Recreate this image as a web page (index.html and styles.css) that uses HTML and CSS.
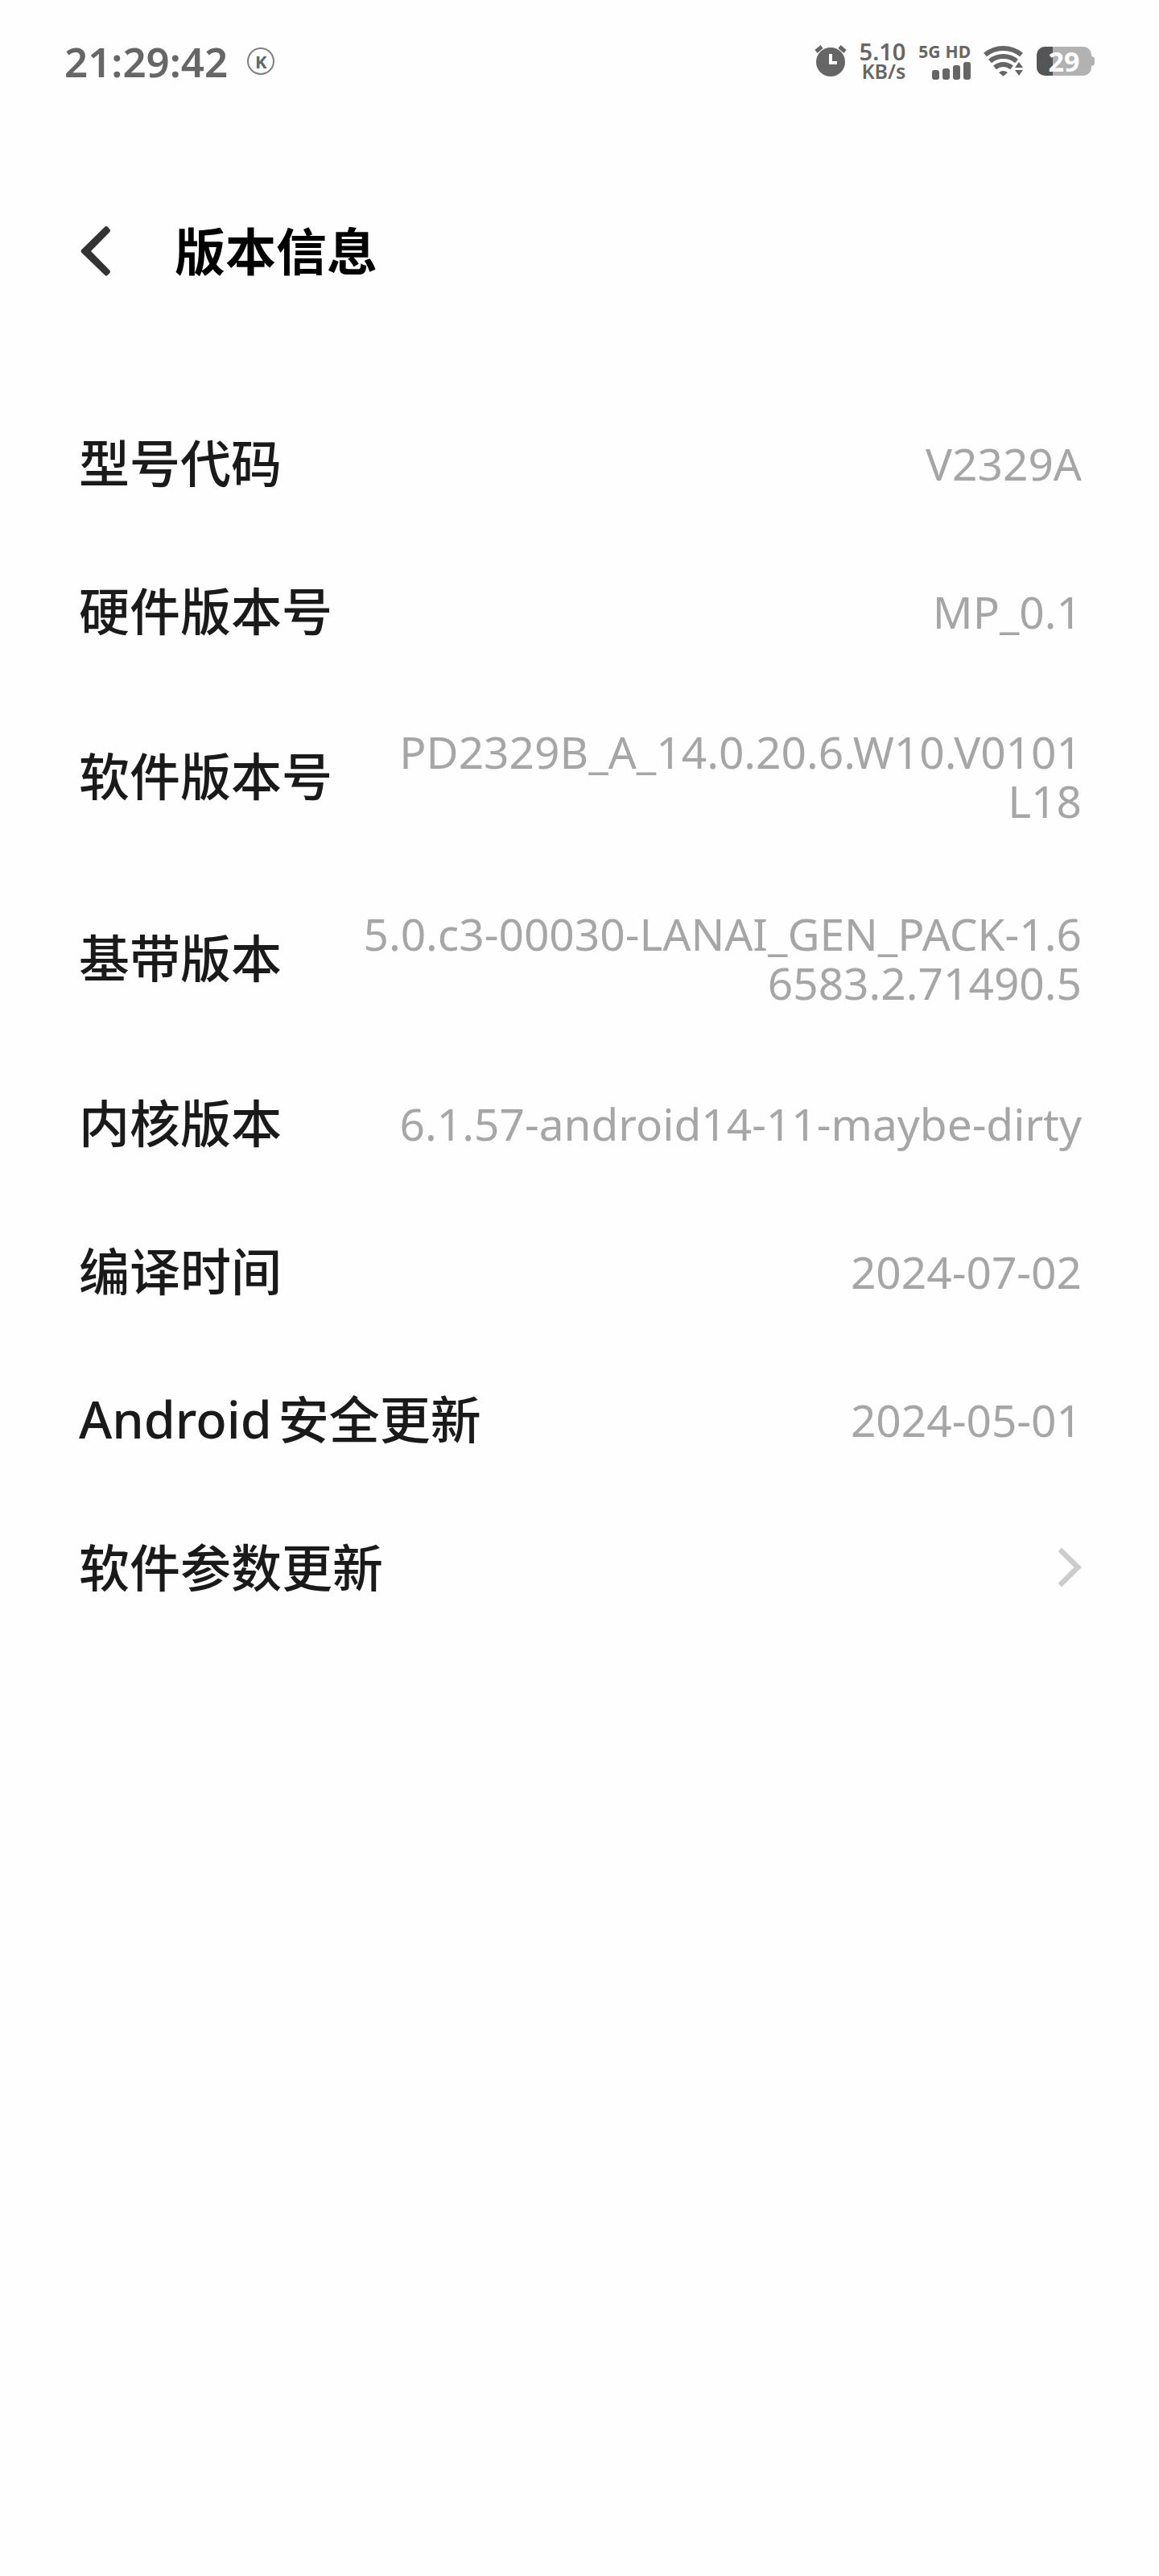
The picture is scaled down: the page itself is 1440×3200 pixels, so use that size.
FILE: index.html
```html
<!DOCTYPE html>
<html lang="zh-CN">
<head>
<meta charset="utf-8">
<meta name="viewport" content="width=device-width, initial-scale=1">
<title>版本信息</title>
<link rel="stylesheet" href="styles.css">
</head>
<body>
<div class="status-bar">
  <div class="status-left">
    <time class="clock">21:29:42</time>
    <span class="badge">K</span>
  </div>
  <div class="status-right">
    <svg width="40" height="40" viewBox="0 0 40 40" aria-hidden="true">
      <circle cx="20" cy="21" r="18" fill="#666"/>
      <path d="M2 8 9 2M38 8 31 2" stroke="#666" stroke-width="5" fill="none"/>
      <path d="M20 11V22H28" stroke="#fff" stroke-width="4" fill="none"/>
    </svg>
    <div class="speed">
      <span class="speed-value">5.10</span>
      <span class="speed-unit">KB/s</span>
    </div>
    <div class="mobile">
      <div class="mobile-labels"><span>5G</span><span>HD</span></div>
      <svg width="48" height="22" viewBox="0 0 48 22" fill="#666" aria-hidden="true">
        <rect x="0" y="10" width="9" height="12" rx="3"/>
        <rect x="13" y="8" width="9" height="14" rx="3"/>
        <rect x="26" y="4" width="9" height="18" rx="3"/>
        <rect x="39" y="0" width="9" height="22" rx="3"/>
      </svg>
    </div>
    <svg width="50" height="38" viewBox="0 0 50 38" aria-hidden="true">
      <g fill="none" stroke="#666" stroke-width="6">
        <path d="M2 11Q12 3 24.500 3T47 11"/>
        <path d="M8 19Q15 13 24.500 13T41 19"/>
        <path d="M14 27Q19 23 24.500 23T35 27"/>
      </g>
      <path d="M19 33Q24.500 29 30 33L25.500 37Q24.500 38 23.500 37Z" fill="#666"/>
      <path d="M44 15 50 26V32L44 38 38 32V26Z" fill="#fefefe"/>
      <path d="M44 20 49 27H39ZM44 37 49 30H39Z" fill="#666"/>
    </svg>
    <div class="battery">
      <div class="battery-body">29</div>
      <div class="battery-tip"></div>
    </div>
  </div>
</div>

<header class="header">
  <button class="back" type="button" aria-label="返回">
    <svg width="42" height="64" viewBox="0 0 42 64" aria-hidden="true">
      <path d="M32.500 1.500Q34 .500 35.500 1.500L38.500 5Q39.500 6.500 38.500 8L15 32 38.500 56Q39.500 57.500 38.500 59L35.500 62Q34 63 32.500 62L3 33.500Q2 32 3 30.500Z" fill="#333"/>
    </svg>
  </button>
  <h1 class="title">版本信息</h1>
</header>

<main>
  <ul class="list">
    <li class="row"><span class="label">型号代码</span><span class="value">V2329A</span></li>
    <li class="row"><span class="label">硬件版本号</span><span class="value">MP_0.1</span></li>
    <li class="row"><span class="label">软件版本号</span><span class="value">PD2329B_A_14.0.20.6.W10.V0101L18</span></li>
    <li class="row"><span class="label">基带版本</span><span class="value">5.0.c3-00030-LANAI_GEN_PACK-1.66583.2.71490.5</span></li>
    <li class="row"><span class="label">内核版本</span><span class="value">6.1.57-android14-11-maybe-dirty</span></li>
    <li class="row"><span class="label">编译时间</span><span class="value">2024-07-02</span></li>
    <li class="row"><span class="label"><span class="latin">Android</span>安全更新</span><span class="value">2024-05-01</span></li>
    <li>
      <a class="row" href="#params">
        <span class="label">软件参数更新</span>
        <svg width="30" height="50" viewBox="0 0 30 50" aria-hidden="true">
          <path d="M4 1.500Q5 .500 6 1.500L30 25 6 48.500Q5 49.500 4 48.500L1.500 46Q.500 45 1.500 44L20.500 25 1.500 6Q.500 5 1.500 4Z" fill="#ccc"/>
        </svg>
      </a>
    </li>
  </ul>
</main>
</body>
</html>
```

FILE: styles.css
```css
* {
  box-sizing: border-box;
}

body {
  margin: 0;
  min-height: 100vh;
  background: #fefefe;
  color: #1a1a1a;
  font-family: "Noto Sans", "Noto Sans CJK SC", sans-serif;
}

/* Status bar */
.status-bar {
  display: flex;
  justify-content: space-between;
  align-items: center;
  height: 152px;
  padding: 0 80px;
  color: #666;
}

.status-left,
.status-right {
  display: flex;
  align-items: center;
}

.status-left {
  gap: 24px;
}

.status-right {
  gap: 16px;
}

.clock {
  font-size: 51px;
  line-height: 60px;
  font-weight: 600;
}

.badge {
  width: 34px;
  height: 34px;
  border: 2px solid #808080;
  border-radius: 50%;
  font-size: 22px;
  line-height: 30px;
  font-weight: 700;
  text-align: center;
}

.speed {
  display: flex;
  flex-direction: column;
  align-items: flex-end;
  font-weight: 600;
  line-height: 25px;
}

.speed-value {
  font-size: 29px;
}

.speed-unit {
  font-size: 25px;
}

.mobile {
  display: flex;
  flex-direction: column;
  align-items: flex-end;
  gap: 2px;
}

.mobile-labels {
  display: flex;
  gap: 6px;
  font-size: 21px;
  line-height: 22px;
  font-weight: 700;
}

.battery {
  display: flex;
  align-items: center;
}

.battery-body {
  width: 68px;
  height: 36px;
  border-radius: 10px;
  background: linear-gradient(to right, #555 29%, #b2b2b2 29%);
  color: #fff;
  font-size: 34px;
  line-height: 36px;
  font-weight: 700;
  text-align: center;
}

.battery-tip {
  width: 4px;
  height: 12px;
  border-radius: 0 4px 4px 0;
  background: #b2b2b2;
}

/* Header */
.header {
  display: flex;
  align-items: center;
  gap: 77px;
  padding: 120px 96px 131px 98px;
}

.back {
  display: flex;
  padding: 0;
  border: 0;
  background: none;
}

.title {
  margin: 0;
  color: #000;
  font-size: 63px;
  line-height: 80px;
  font-weight: 600;
}

/* Version list */
.list {
  margin: 0;
  padding: 0;
  list-style: none;
}

.row {
  display: flex;
  justify-content: space-between;
  align-items: center;
  gap: 76px;
  padding: 52px 96px 52px 98px;
  color: inherit;
  text-decoration: none;
}

.label {
  flex: none;
  font-size: 63px;
  line-height: 80px;
  font-weight: 500;
}

.latin {
  margin-right: 8px;
}

.value {
  color: #a6a6a6;
  font-size: 55px;
  line-height: 61px;
  text-align: right;
  word-break: break-all;
}
```
